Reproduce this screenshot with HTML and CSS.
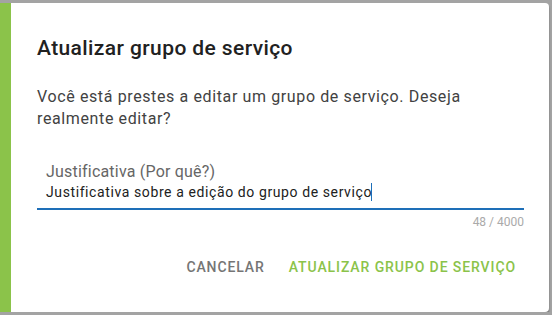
FILE: index.html
```html
<!DOCTYPE html>
<html>
<head>
    <meta name="viewport" content="width=device-width, initial-scale=1.0">
    <title>Atualizar grupo de serviço</title>
    <link rel="stylesheet" href="styles.css">
</head>
<body>
    <div class="dialog">
        <h2 class="dialog-title">Atualizar grupo de serviço</h2>
        <p class="dialog-text">Você está prestes a editar um grupo de serviço. Deseja realmente editar?</p>

        <div class="field">
            <label class="field-label">Justificativa (Por quê?)</label>
            <div class="field-input">Justificativa sobre a edição do grupo de serviço<span class="caret"></span></div>
        </div>
        <div class="counter">48 / 4000</div>

        <div class="actions">
            <button class="btn btn-cancel">Cancelar</button>
            <button class="btn btn-confirm">Atualizar grupo de serviço</button>
        </div>
    </div>
</body>
</html>
```

FILE: styles.css
```css
body {
    margin: 0;
    padding: 3px 3px 0 0;
    background-color: #a3a3a3;
    font-family: Roboto, "Liberation Sans", sans-serif;
    color: #212121;
}
.dialog {
    width: 549px;
    height: 309px;
    box-sizing: border-box;
    background: white;
    border-left: 11px solid #8bc34a;
    border-radius: 0 4px 4px 0;
    padding: 29px 25px 0 26px;
    box-shadow: 0 2px 2px rgba(0,0,0,0.35);
}
.dialog-title {
    margin: 0;
    font-size: 21px;
    font-weight: 500;
    line-height: 32px;
    letter-spacing: 0.4px;
    color: #212121;
}
.dialog-text {
    margin: 22px 0 0;
    font-size: 16px;
    line-height: 22px;
    letter-spacing: 0.62px;
    color: #424242;
}
.field {
    margin-top: 32px;
    padding: 0 0 6px 9px;
    border-bottom: 2px solid #1e6fb8;
}
.field-label {
    display: block;
    font-size: 16px;
    line-height: 20px;
    letter-spacing: 0.2px;
    color: #666;
}
.field-input {
    font-size: 14px;
    line-height: 20px;
    letter-spacing: 0.6px;
    color: #212121;
}
.caret {
    display: inline-block;
    width: 1px;
    height: 18px;
    margin-left: -0.6px;
    background: #1e6fb8;
    vertical-align: -4px;
}
.counter {
    margin-top: 4px;
    text-align: right;
    font-size: 12px;
    line-height: 16px;
    color: #aaa;
}
.actions {
    display: flex;
    justify-content: flex-end;
    gap: 8px;
    margin-top: 19px;
}
.btn {
    background: none;
    border: none;
    padding: 0 8px;
    height: 36px;
    font-family: inherit;
    font-size: 14px;
    font-weight: 500;
    letter-spacing: 0.9px;
    text-transform: uppercase;
    cursor: pointer;
}
.btn-cancel {
    color: #757575;
}
.btn-confirm {
    color: #8bc34a;
}
```
